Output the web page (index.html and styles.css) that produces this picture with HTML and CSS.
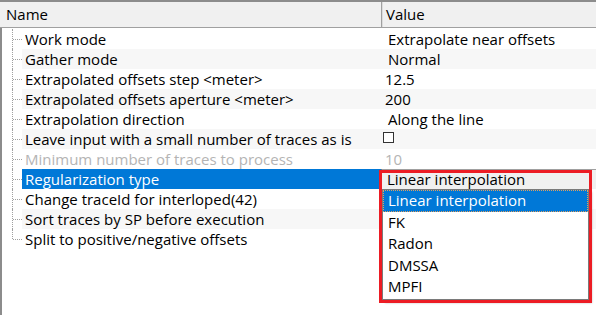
FILE: index.html
```html
<!DOCTYPE html>
<html lang="en">
<head>
    <meta charset="UTF-8">
    <title>Parameters</title>
    <link rel="stylesheet" href="styles.css">
</head>
<body>

    <div class="panel">
        <div class="header">
            <div class="h-name">Name</div>
            <div class="h-value">Value</div>
        </div>

        <div class="rows">
            <div class="row">
                <div class="indent"></div>
                <div class="name">Work mode</div>
                <div class="value combo-value">Extrapolate near offsets</div>
            </div>
            <div class="row">
                <div class="indent"></div>
                <div class="name">Gather mode</div>
                <div class="value combo-value">Normal</div>
            </div>
            <div class="row">
                <div class="indent"></div>
                <div class="name">Extrapolated offsets step &lt;meter&gt;</div>
                <div class="value">12.5</div>
            </div>
            <div class="row">
                <div class="indent"></div>
                <div class="name">Extrapolated offsets aperture &lt;meter&gt;</div>
                <div class="value">200</div>
            </div>
            <div class="row">
                <div class="indent"></div>
                <div class="name">Extrapolation direction</div>
                <div class="value combo-value">Along the line</div>
            </div>
            <div class="row">
                <div class="indent"></div>
                <div class="name">Leave input with a small number of traces as is</div>
                <div class="value"><span class="checkbox"></span></div>
            </div>
            <div class="row disabled">
                <div class="indent"></div>
                <div class="name">Minimum number of traces to process</div>
                <div class="value">10</div>
            </div>
            <div class="row selected">
                <div class="indent"></div>
                <div class="name">Regularization type</div>
                <div class="value combo">Linear interpolation</div>
            </div>
            <div class="row">
                <div class="indent"></div>
                <div class="name">Change traceId for interloped(42)</div>
                <div class="value"></div>
            </div>
            <div class="row">
                <div class="indent"></div>
                <div class="name">Sort traces by SP before execution</div>
                <div class="value"></div>
            </div>
            <div class="row last">
                <div class="indent"></div>
                <div class="name">Split to positive/negative offsets</div>
                <div class="value"></div>
            </div>
        </div>

        <!-- open drop-down of the combo box -->
        <div class="dropdown">
            <div class="option active">Linear interpolation</div>
            <div class="option">FK</div>
            <div class="option">Radon</div>
            <div class="option">DMSSA</div>
            <div class="option">MPFI</div>
        </div>

        <!-- red annotation frame -->
        <div class="mark"></div>
    </div>

</body>
</html>
```
FILE: styles.css
```css
body {
    margin: 0;
    background-color: #fff;
    font-family: "Open Sans", sans-serif;
    font-size: 15px;
    color: #000;
}

.panel {
    position: relative;
    width: 596px;
    height: 315px;
    overflow: hidden;
    border-top: 2px solid #8c8c8c;
    box-sizing: border-box;
}

.header {
    display: flex;
    height: 25px;
    background-color: #f0f0f0;
    border-bottom: 1px solid #a0a0a0;
    line-height: 25px;
}

.h-name {
    width: 375px;
    padding-left: 6px;
    border-right: 1px solid #a0a0a0;
    box-shadow: 1px 0 0 #dcdcdc;
}

.h-value {
    flex-grow: 1;
    padding-left: 4px;
}

.rows {
    border-left: 2px solid #8c8c8c;
    padding-top: 1px;
    height: 300px;
}

.row {
    display: flex;
    height: 20px;
    line-height: 20px;
    white-space: nowrap;
}

.indent {
    width: 20px;
    position: relative;
    flex-shrink: 0;
}

/* dotted tree lines */
.indent::before {
    content: '';
    position: absolute;
    left: 10px;
    top: 0;
    height: 20px;
    border-left: 1px dotted #a0a0a0;
}

.indent::after {
    content: '';
    position: absolute;
    left: 11px;
    top: 10px;
    width: 9px;
    border-top: 1px dotted #a0a0a0;
}

.row.last .indent::before {
    height: 10px;
}

.name {
    width: 356px;
    padding-left: 3px;
}

.value {
    flex-grow: 1;
    padding-left: 4px;
}

.row:nth-child(even) .name,
.row:nth-child(even) .value {
    background-color: #f7f7f7;
}

.value.combo-value {
    padding-left: 7px;
    padding-top: 2px;
    height: 18px;
    line-height: 16px;
}

.checkbox {
    display: inline-block;
    width: 9px;
    height: 9px;
    margin-left: -2px;
    margin-top: 3px;
    vertical-align: top;
    border: 1px solid #333;
    background-color: #fff;
}

.row.disabled {
    color: #b4b4b4;
}

.row.selected .name {
    background-color: #0078d7;
    color: #fff;
}

.row.selected .value.combo {
    background-color: #f0f0f0;
    border-top: 1px solid #a0a0a0;
    border-left: 1px solid #505050;
    height: 19px;
    line-height: 19px;
    padding-left: 5px;
}

.dropdown {
    position: absolute;
    left: 382px;
    top: 187px;
    width: 207px;
    height: 111px;
    background-color: #fff;
    border: 1px solid #7a7a7a;
    box-shadow: 3px 3px 2px rgba(0, 0, 0, 0.25);
    box-sizing: border-box;
}

.option {
    height: 21.5px;
    line-height: 21px;
    padding-left: 5px;
}

.option.active {
    background-color: #0078d7;
    color: #fff;
    outline: 1px dotted #e0a060;
    outline-offset: -1px;
}

.mark {
    position: absolute;
    left: 379px;
    top: 168px;
    width: 213px;
    height: 133px;
    border: 3px solid #ec1c24;
    box-sizing: border-box;
}
```
